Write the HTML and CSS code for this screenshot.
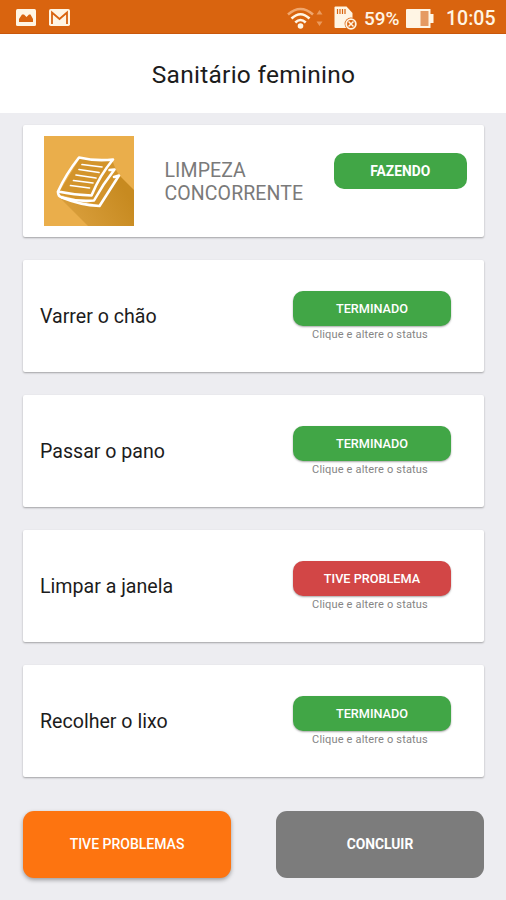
FILE: index.html
```html
<!DOCTYPE html>
<html lang="pt-BR">
<head>
<meta charset="utf-8">
<title>Sanitário feminino</title>
<link rel="stylesheet" href="styles.css">
</head>
<body>
<div class="statusbar">
  <svg class="ic-photo" width="20" height="17" viewBox="0 0 20 17"><rect width="20" height="17" rx="1.5" fill="#fff5e4"/><path d="M3 13V10L6 5.500H8L10.500 8L13 5.500H14.500L17 10V13Z" fill="#d9640f"/></svg>
  <svg class="ic-mail" width="21" height="17" viewBox="0 0 21 17"><rect width="21" height="17" rx="1.8" fill="#fff5e4"/><path d="M3 15V3.500L10.500 10L18 3.500V15" fill="none" stroke="#d9640f" stroke-width="1.8"/></svg>
  <svg class="ic-wifi" width="27" height="23" viewBox="0 0 27 23"><g fill="none" stroke="#fff5e4" stroke-width="2.6"><path d="M1 7.500Q13.500-3.500 26 7.500" stroke="#f0a66d"/><path d="M4.500 11.500Q13.500 3 22.500 11.500"/><path d="M8.300 15.500Q13.500 10.500 18.700 15.500"/></g><circle cx="13.500" cy="19" r="2.800" fill="#fff5e4"/></svg>
  <svg class="ic-arrows" width="7" height="18" viewBox="0 0 7 18"><path d="M.5 5.500L3.500 1L6.500 5.500ZM.5 12.500L3.500 17L6.500 12.500Z" fill="#eb9a5c"/></svg>
  <svg class="ic-sd" width="23" height="25" viewBox="0 0 23 25"><path d="M1.500.5H12.500L18.500 7V22H1.500Q.5 22 .5 21V1.500Q.5.5 1.500.5Z" fill="#fff5e4"/><path d="M3.500 3V8M6 3V8M8.500 3V8M11 3V8" stroke="#d9640f" stroke-width="1.200"/><circle cx="17" cy="18" r="6.400" fill="#d9640f"/><circle cx="17" cy="18" r="4.800" fill="none" stroke="#fff5e4" stroke-width="1.800"/><path d="M14.500 15.500L19.500 20.500M19.500 15.500L14.500 20.500" stroke="#fff5e4" stroke-width="1.500"/></svg>
  <span class="pct">59%</span>
  <svg class="ic-battery" width="28" height="19" viewBox="0 0 28 19"><path d="M1 0H24.500V5H27.500V14H24.500V19H1Q0 19 0 18V1Q0 0 1 0Z" fill="#fff5e4"/><path d="M14.500 2H22.500V17H14.500Z" fill="#e59a62"/></svg>
  <span class="clock">10:05</span>
</div>
<header class="title">Sanitário feminino</header>
<main class="content">
  <section class="card summary">
    <svg class="paper" width="90" height="90" viewBox="0 0 90 90">
      <defs><linearGradient id="shade" x1="0" y1="1" x2="1" y2="0.600"><stop offset="0" stop-color="#dda342"/><stop offset="1" stop-color="#c78a20"/></linearGradient></defs>
      <rect width="90" height="90" fill="#eaae4b"/>
      <path d="M14 60L44 90H90V54L75 39L55 70Z" fill="url(#shade)"/>
      <path d="M36 22L68 24L72 34L75 39L57 70L14 58Z" fill="#d3942b"/>
      <g fill="none" stroke="#fff" stroke-width="2.600" stroke-linejoin="round" stroke-linecap="round">
        <path d="M35 21.500Q52 25.500 69 23.500Q56 39 47.500 59.500Q30 59 14 55.500Q22 38 35 21.500Z"/>
        <path d="M14 56Q14 60.500 18 61.500Q34 66 50 64.500Q59 48 70.500 33.500L65.500 34"/>
        <path d="M18 61.500Q36 69 55.500 70L75 39.500L70 41"/>
      </g>
      <path d="M38 28.500L58 31M35 33.500L55 36.500M32 39L52 42M29.500 44.500L49 47M26.500 49.500L45.500 52" stroke="#fff" stroke-width="1.700" stroke-linecap="round"/>
    </svg>
    <div class="kind">LIMPEZA<br>CONCORRENTE</div>
    <button class="pill doing">FAZENDO</button>
  </section>
  <section class="card"><div class="task">Varrer o chão</div><div class="state"><button class="pill">TERMINADO</button><span class="hint">Clique e altere o status</span></div></section>
  <section class="card"><div class="task">Passar o pano</div><div class="state"><button class="pill">TERMINADO</button><span class="hint">Clique e altere o status</span></div></section>
  <section class="card"><div class="task">Limpar a janela</div><div class="state"><button class="pill problem">TIVE PROBLEMA</button><span class="hint">Clique e altere o status</span></div></section>
  <section class="card"><div class="task">Recolher o lixo</div><div class="state"><button class="pill">TERMINADO</button><span class="hint">Clique e altere o status</span></div></section>
</main>
<footer class="actions">
  <button class="action report">TIVE PROBLEMAS</button>
  <button class="action finish">CONCLUIR</button>
</footer>
</body>
</html>
```
FILE: styles.css
```css
* { box-sizing: border-box; }
body { margin: 0; height: 900px; overflow: hidden; background: #ededf1; font-family: Roboto, sans-serif; color: #1c1c1c; }
button { border: 0; padding: 0; font-family: inherit; color: #fff; }
svg { display: block; flex: none; }
.statusbar { height: 34px; background: #d9640f; border-bottom: 1px solid #c9570b; display: flex; align-items: flex-start; color: #fff5e4; font-size: 19.500px; font-weight: 500; line-height: 38px; white-space: nowrap; }
.ic-photo { margin: 9px 0 0 16px; }
.ic-mail { margin: 9px 0 0 13px; }
.ic-wifi { margin: 7px 0 0 217px; }
.ic-arrows { margin: 9px 0 0 2px; }
.ic-sd { margin: 6px 0 0 11px; }
.pct { width: 37px; margin-left: 7px; font-size: 19px; }
.ic-battery { margin: 9px 0 0 5px; }
.clock { margin-left: 12px; }
.title { height: 79px; background: #fff; display: flex; align-items: center; justify-content: center; font-size: 24.500px; padding: 2px 0 0 1px; letter-spacing: .27px; }
.content { padding: 11.500px 22px 0 23px; display: flex; flex-direction: column; gap: 23.100px; }
.card { height: 112px; flex: none; background: #fff; border-radius: 2px; box-shadow: 0 1px 2px rgba(0,0,0,.32); display: flex; align-items: flex-start; }
.paper { margin: 11.500px 0 0 21px; }
.kind { width: 169.500px; margin: 34.500px 0 0 30px; padding-left: .5px; font-size: 19.500px; line-height: 23px; letter-spacing: .1px; color: #7a7a7a; }
.pill { display: block; width: 158px; height: 35px; border-radius: 10px; background: #41a646; font-size: 12.700px; font-weight: 500; box-shadow: 0 1px 2px rgba(0,0,0,.35); }
.doing { width: 133.500px; height: 36px; margin-top: 28.800px; font-size: 13.800px; font-weight: 700; box-shadow: none; }
.problem { background: #d24646; }
.task { width: 270px; padding: 45.500px 0 0 17px; font-size: 19.600px; line-height: 23px; }
.state { display: flex; flex-direction: column; align-items: center; padding-top: 31px; }
.hint { margin: 2px 4px 0 0; font-size: 11px; line-height: 13px; letter-spacing: .17px; color: #858585; white-space: nowrap; }
.actions { display: flex; gap: 45px; padding: 34px 22px 0 23px; }
.action { width: 208px; height: 67px; border-radius: 11px; font-size: 14px; font-weight: 500; }
.report { background: #fd7410; box-shadow: 0 2px 4px rgba(0,0,0,.35); }
.finish { background: #7c7c7c; font-weight: 700; font-size: 13.800px; }
```
